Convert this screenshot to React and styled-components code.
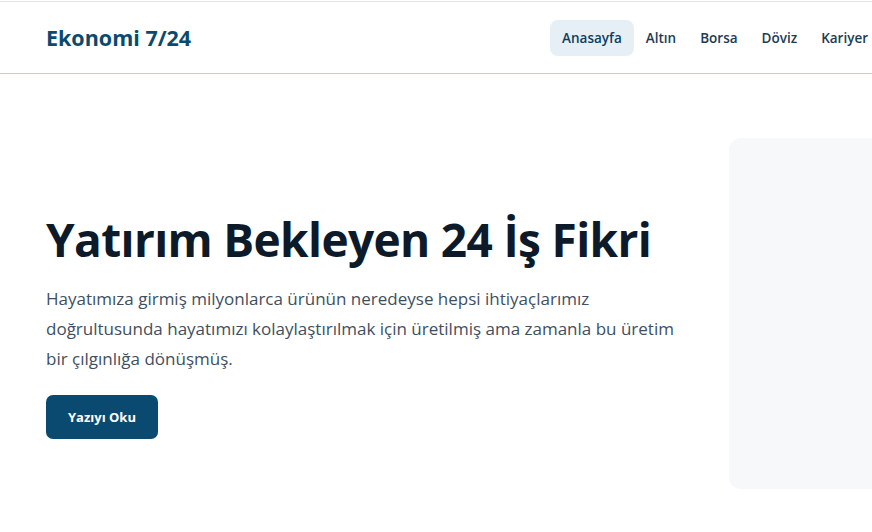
import React from "react";
import styled, { createGlobalStyle } from "styled-components";

const GlobalStyle = createGlobalStyle`
  * {
    box-sizing: border-box;
  }
  body {
    margin: 0;
    background: #ffffff;
    font-family: "Open Sans", "Noto Sans", sans-serif;
    overflow: hidden;
  }
`;

const navItems = ["Anasayfa", "Altın", "Borsa", "Döviz", "Kariyer"];

function App() {
  return (
    <Page>
      <GlobalStyle />
      <Header>
        <Logo>Ekonomi 7/24</Logo>
        <Nav>
          {navItems.map((item, i) => (
            <NavLink key={item} $active={i === 0}>
              {item}
            </NavLink>
          ))}
        </Nav>
      </Header>
      <Hero>
        <HeroText>
          <Title>Yatırım Bekleyen 24 İş Fikri</Title>
          <Desc>
            Hayatımıza girmiş milyonlarca ürünün neredeyse hepsi ihtiyaçlarımız
            doğrultusunda hayatımızı kolaylaştırılmak için üretilmiş ama
            zamanla bu üretim bir çılgınlığa dönüşmüş.
          </Desc>
          <Button>Yazıyı Oku</Button>
        </HeroText>
        <HeroImage />
      </Hero>
    </Page>
  );
}

export default App;

const Page = styled.div`
  width: 100%;
  overflow: hidden;
  border-top: 1px solid #e3e3e3;
  margin-top: 1px;
`;

const Header = styled.header`
  height: 72px;
  padding-left: 46px;
  display: flex;
  align-items: center;
  justify-content: space-between;
  border-bottom: 1px solid #b4d3e6;
`;

const Logo = styled.div`
  font-size: 21.5px;
  font-weight: 700;
  color: #0b4a6f;
`;

const Nav = styled.nav`
  display: flex;
  align-items: center;
  margin-right: -8px;
`;

const NavLink = styled.a`
  display: block;
  padding: 9px 12px;
  border-radius: 8px;
  font-size: 13.5px;
  font-weight: 600;
  color: ${(props) => (props.$active ? "#0f3d5e" : "#1d3b55")};
  background: ${(props) => (props.$active ? "#e7eff6" : "transparent")};
  cursor: pointer;
`;

const Hero = styled.section`
  display: grid;
  grid-template-columns: 636px 420px;
  gap: 47px;
  align-items: center;
  padding: 64px 0 40px 46px;
`;

const HeroText = styled.div`
  display: flex;
  flex-direction: column;
  align-items: flex-start;
  padding-top: 24px;
`;

const Title = styled.h1`
  margin: 0 0 16px;
  font-size: 46px;
  font-weight: 700;
  line-height: 1.2;
  color: #0c1a29;
  letter-spacing: -0.65px;
  white-space: nowrap;
`;

const Desc = styled.p`
  margin: 0 0 21px;
  font-size: 17px;
  line-height: 30px;
  color: #3e4f62;
`;

const Button = styled.button`
  padding: 0 22px;
  height: 44px;
  border: none;
  border-radius: 7px;
  background: #0b4a70;
  color: #ffffff;
  font-family: inherit;
  font-size: 13px;
  font-weight: 700;
  cursor: pointer;
`;

const HeroImage = styled.div`
  height: 351px;
  border-radius: 12px;
  background: #f7f8fa;
`;
